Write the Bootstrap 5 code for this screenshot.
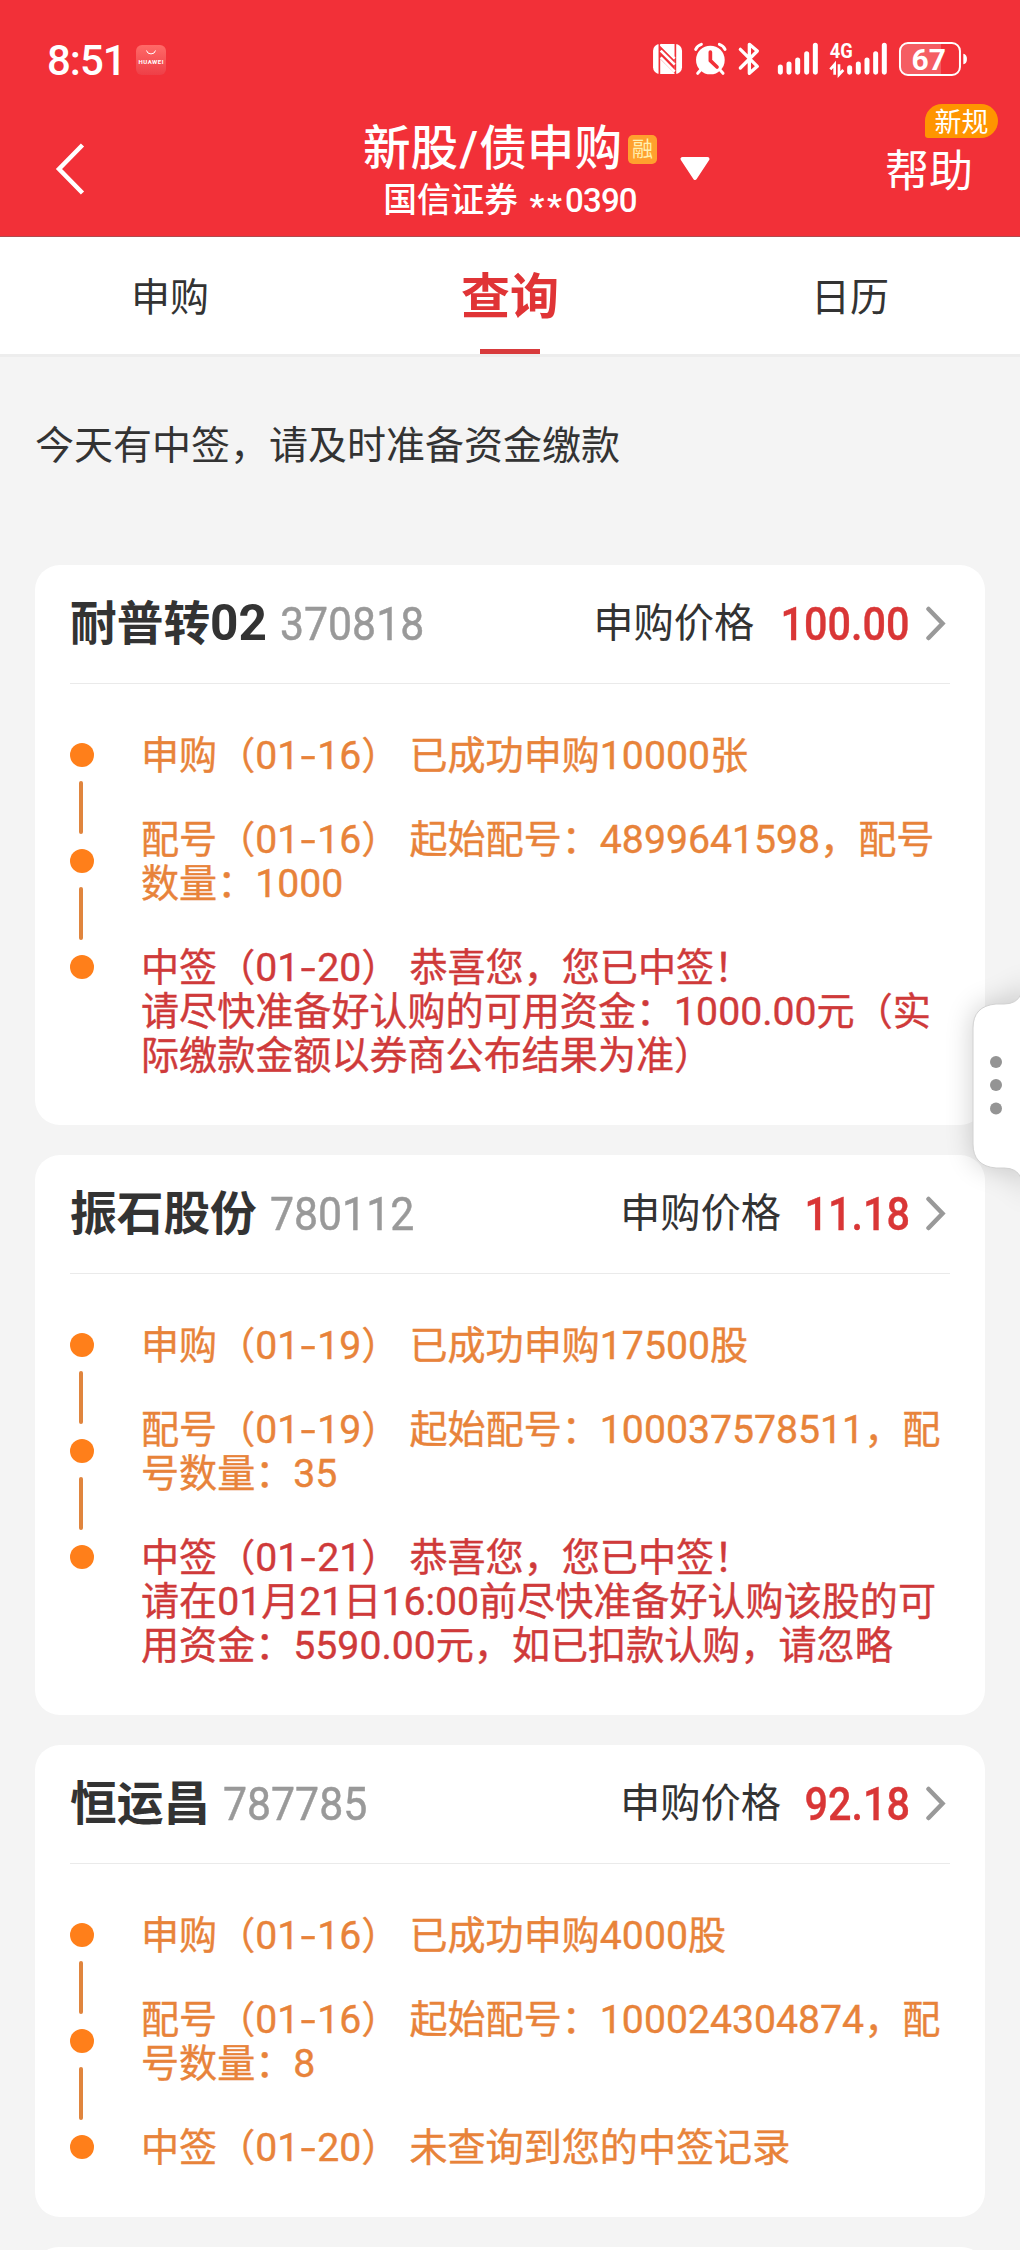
<!DOCTYPE html>
<html lang="zh-CN">
<head>
<meta charset="utf-8">
<meta name="viewport" content="width=device-width, initial-scale=1">
<title>新股/债申购</title>
<link rel="stylesheet" href="https://cdn.jsdelivr.net/npm/bootstrap@5.3.0/dist/css/bootstrap.min.css">
<style>
  body{font-family:Roboto,"Noto Sans CJK SC",sans-serif;background:#f4f4f4;color:#333;width:1020px;height:2250px;overflow:hidden;position:relative}
  .app-top{background:#f23038;height:237px;border-bottom:1px solid #b04a4e;color:#fff}
  .status-row{height:100px;padding:41px 50px 0 47px}
  .clock{font-size:42px;line-height:40px;font-weight:500;letter-spacing:-1px;width:89px}
  .app-chip{margin-top:4px}
  .nav-grid{display:grid;grid-template-columns:1fr auto 1fr;height:136px}
  .back-ico{margin:42px 0 0 55px}
  .page-title{font-size:47.6px;line-height:58px;font-weight:500;margin-top:20px}
  .slash{display:inline-block;width:21px;text-align:center}
  .margin-tag{width:29px;height:29px;border-radius:5px;background:#ffa02e;color:#fff0b0;font-size:21px;line-height:28px;margin:0 0 0 6px}
  .broker{font-size:33.700px;line-height:46px;font-weight:500}
  .stars{display:inline-block;width:36px;letter-spacing:2.6px;vertical-align:-6px;margin-left:11px}
  .acct{font-size:33px;font-weight:500;letter-spacing:-.8px}
  .down-ico{margin:56px 0 0 22px}
  .help-link{font-size:44px;line-height:60px;padding:42px 47px 0 0;position:relative}
  .new-flag{position:absolute;left:40px;top:4px;width:73px;height:34px;border-radius:17px 17px 17px 3px;background:#ff9500;font-size:27px;line-height:38px;text-align:center}
  .tab-row{height:120px;background:#fff;border-bottom:3px solid #ededed}
  .tab-item{flex:1 1 0;font-size:39px;color:#333;position:relative;padding-top:5px}
  .tab-item.active{font-size:49px;font-weight:700;color:#e03436}
  .tab-item.active::after{content:"";position:absolute;left:140px;bottom:0;width:60px;height:5px;background:#d83a3c}
  .notice{font-size:39px;line-height:60px;padding:59px 35px 89px}
  .stock{border:0;border-radius:25px;width:950px;margin:0 0 30px 35px;padding:0 35px 47px;background:#fff}
  .stock-head{height:119px;border-bottom:1px solid #eaeaea;line-height:60px}
  .nm{font-size:46.7px;font-weight:700}
  .nm-num{font-size:49.5px;line-height:1}
  .code{font-size:47px;color:#999;display:inline-block;transform:scaleX(.91);transform-origin:0 50%;margin-left:13px;-webkit-text-stroke:.5px #999}
  .lbl{font-size:40.3px}
  .price{font-size:47px;font-weight:500;color:#d93636;transform:scaleX(.88);transform-origin:100% 50%;margin-left:9px;-webkit-text-stroke:.4px #d93636}
  .steps{padding-top:50px;font-size:38.1px;line-height:44px;color:#e8833a;-webkit-text-stroke:.4px currentColor}
  .rail{width:71px;padding-top:9px}
  .dot{width:24px;height:24px;border-radius:50%;background:#ff7f1a}
  .bar{width:4px;height:53px;border-radius:2px;background:#e0853e;margin:14px 0 15px 9px}
  .step{margin-bottom:40px;white-space:nowrap}
  .step:last-child{margin-bottom:0}
  .step div{height:44px}
  .win{color:#cf3a3a}
  .n{font-size:39.2px}
  .hy{display:inline-block;width:18px;text-align:center;transform:scaleX(1.35)}
  .sp{display:inline-block;width:10px}
  .drawer{position:absolute;right:0;top:950px}
</style>
<script src="https://cdn.jsdelivr.net/npm/bootstrap@5.3.0/dist/js/bootstrap.bundle.min.js"></script>
</head>
<body>
<header class="app-top">
  <div class="status-row d-flex align-items-start">
    <span class="clock">8:51</span>
    <svg class="app-chip" width="30" height="30" viewBox="0 0 30 30">
      <defs><linearGradient id="hw" x1="0" y1="0" x2="0" y2="1"><stop offset="0" stop-color="#ff6a68"/><stop offset="1" stop-color="#ee3f47"/></linearGradient></defs>
      <rect width="30" height="30" rx="6" fill="url(#hw)"/>
      <path d="M10.5 5.500a4.600 4.300 0 0 0 9 0" fill="none" stroke="#fff" stroke-width="1"/>
      <text x="15" y="19.300" font-size="6" font-weight="700" fill="#fff" text-anchor="middle" textLength="25" font-family="Roboto">HUAWEI</text>
    </svg>
    <svg class="ms-auto" width="320" height="36.670" viewBox="30 63 960 110" fill="#fff">
      <rect x="39" y="72" width="87" height="90" rx="20"/>
      <path d="M58 70v92M106 72v92" stroke="#f23038" stroke-width="5"/>
      <path d="M60 74L104 118V160L60 116Z" fill="#f23038"/>
      <path d="M62 92L104 134M62 112L104 155M62 74L104 116" stroke="#fff" stroke-width="8" fill="none"/>
      <circle cx="211" cy="120" r="43"/>
      <path d="M167 88Q172 77 184 73M255 88Q250 77 238 73M181 151l-8 9M241 151l8 9" stroke="#fff" stroke-width="9" stroke-linecap="round" fill="none"/>
      <path d="M211 96V122L231 141" stroke="#f23038" stroke-width="11" stroke-linecap="round" stroke-linejoin="round" fill="none"/>
      <path d="M301 88L352 139L328 160V73L352 93L301 144" stroke="#fff" stroke-width="10" stroke-linejoin="round" stroke-linecap="round" fill="none"/>
      <path d="M421 141V157M447 132V157M473 120V157M500 101V157M526 76V157M629 143V157M655 132V157M681 120V157M707 101V157M733 76V157" stroke="#fff" stroke-width="15" stroke-linecap="round"/>
      <text x="569" y="114" font-size="58" font-weight="700" font-family="Roboto" textLength="69" lengthAdjust="spacingAndGlyphs">4G</text>
      <path d="M571 148L584 133V164M597 133V164L610 150" fill="none" stroke="#fff" stroke-width="8"/>
      <path d="M795 72H903V162H795Q782 160 782 144V90Q782 74 795 72Z" fill="#fff" opacity=".22"/>
      <rect x="780" y="69" width="180" height="96" rx="24" fill="none" stroke="#fff" stroke-width="6"/>
      <path d="M970 101Q981 103 981 117T970 133Z"/>
      <text x="866" y="150" font-size="90" font-weight="700" font-family="Roboto" text-anchor="middle">67</text>
    </svg>
  </div>
  <div class="nav-grid">
    <div><svg class="back-ico d-block" width="32" height="54" viewBox="0 0 32 54"><path d="M27.500 3L4 27L27.500 51" fill="none" stroke="#fff" stroke-width="4.500"/></svg></div>
    <div>
      <div class="d-flex page-title align-items-center"><span>新股<span class="slash">/</span>债申购</span><span class="margin-tag fw-normal text-center">融</span></div>
      <div class="broker text-center text-nowrap">国信证券<span class="stars">**</span><span class="acct">0390</span></div>
    </div>
    <div class="d-flex justify-content-between align-items-start">
      <svg class="down-ico" width="32" height="26" viewBox="0 0 32 26"><path d="M3.500 3H28.500L16 22Z" fill="#fff" stroke="#fff" stroke-width="4" stroke-linejoin="round"/></svg>
      <div class="help-link">帮助<span class="new-flag">新规</span></div>
    </div>
  </div>
</header>

<nav class="tab-row d-flex text-center">
  <div class="tab-item d-flex align-items-center justify-content-center">申购</div>
  <div class="tab-item active d-flex align-items-center justify-content-center">查询</div>
  <div class="tab-item d-flex align-items-center justify-content-center">日历</div>
</nav>

<main>
  <div class="notice">今天有中签，请及时准备资金缴款</div>

  <section class="card stock">
    <div class="stock-head d-flex align-items-center">
      <span class="nm">耐普转<span class="nm-num">02</span></span><span class="code">370818</span>
      <span class="lbl ms-auto">申购价格</span><span class="price">100.00</span>
      <svg class="ms-3" width="24" height="36" viewBox="0 0 24 36"><path d="M2.500 3L16.500 17.500L2.500 32" fill="none" stroke="#999" stroke-width="4.500" stroke-linecap="round"/></svg>
    </div>
    <div class="steps d-flex">
      <div class="rail"><div class="dot"></div><div class="bar"></div><div class="dot"></div><div class="bar"></div><div class="dot"></div></div>
      <div>
        <div class="step"><div>申购（<span class="n">01<span class="hy">-</span>16</span>）<span class="sp"></span>已成功申购<span class="n">10000</span>张</div></div>
        <div class="step"><div>配号（<span class="n">01<span class="hy">-</span>16</span>）<span class="sp"></span>起始配号：<span class="n">4899641598</span>，配号</div><div>数量：<span class="n">1000</span></div></div>
        <div class="step win"><div>中签（<span class="n">01<span class="hy">-</span>20</span>）<span class="sp"></span>恭喜您，您已中签！</div><div>请尽快准备好认购的可用资金：<span class="n">1000.00</span>元（实</div><div>际缴款金额以券商公布结果为准）</div></div>
      </div>
    </div>
  </section>

  <section class="card stock">
    <div class="stock-head d-flex align-items-center">
      <span class="nm">振石股份</span><span class="code">780112</span>
      <span class="lbl ms-auto">申购价格</span><span class="price">11.18</span>
      <svg class="ms-3" width="24" height="36" viewBox="0 0 24 36"><path d="M2.500 3L16.500 17.500L2.500 32" fill="none" stroke="#999" stroke-width="4.500" stroke-linecap="round"/></svg>
    </div>
    <div class="steps d-flex">
      <div class="rail"><div class="dot"></div><div class="bar"></div><div class="dot"></div><div class="bar"></div><div class="dot"></div></div>
      <div>
        <div class="step"><div>申购（<span class="n">01<span class="hy">-</span>19</span>）<span class="sp"></span>已成功申购<span class="n">17500</span>股</div></div>
        <div class="step"><div>配号（<span class="n">01<span class="hy">-</span>19</span>）<span class="sp"></span>起始配号：<span class="n">100037578511</span>，配</div><div>号数量：<span class="n">35</span></div></div>
        <div class="step win"><div>中签（<span class="n">01<span class="hy">-</span>21</span>）<span class="sp"></span>恭喜您，您已中签！</div><div>请在<span class="n">01</span>月<span class="n">21</span>日<span class="n">16:00</span>前尽快准备好认购该股的可</div><div>用资金：<span class="n">5590.00</span>元，如已扣款认购，请忽略</div></div>
      </div>
    </div>
  </section>

  <section class="card stock">
    <div class="stock-head d-flex align-items-center">
      <span class="nm">恒运昌</span><span class="code">787785</span>
      <span class="lbl ms-auto">申购价格</span><span class="price">92.18</span>
      <svg class="ms-3" width="24" height="36" viewBox="0 0 24 36"><path d="M2.500 3L16.500 17.500L2.500 32" fill="none" stroke="#999" stroke-width="4.500" stroke-linecap="round"/></svg>
    </div>
    <div class="steps d-flex">
      <div class="rail"><div class="dot"></div><div class="bar"></div><div class="dot"></div><div class="bar"></div><div class="dot"></div></div>
      <div>
        <div class="step"><div>申购（<span class="n">01<span class="hy">-</span>16</span>）<span class="sp"></span>已成功申购<span class="n">4000</span>股</div></div>
        <div class="step"><div>配号（<span class="n">01<span class="hy">-</span>16</span>）<span class="sp"></span>起始配号：<span class="n">100024304874</span>，配</div><div>号数量：<span class="n">8</span></div></div>
        <div class="step"><div>中签（<span class="n">01<span class="hy">-</span>20</span>）<span class="sp"></span>未查询到您的中签记录</div></div>
      </div>
    </div>
  </section>

  <section class="card stock"></section>
</main>

<svg class="drawer" width="100" height="270" viewBox="920 950 100 270">
  <defs><filter id="sh" x="-100%" y="-50%" width="300%" height="200%"><feGaussianBlur stdDeviation="14"/></filter></defs>
  <path d="M1030 985V1200L1020 1182Q1018 1168 1004 1168H994Q973 1164 973 1146V1026Q973 1006 994 1004H1004Q1018 1004 1020 985Z" fill="#000" opacity=".2" filter="url(#sh)"/>
  <path d="M1021 994Q1017 1004 1004 1004H996Q973 1006 973 1028V1144Q973 1166 996 1168H1004Q1017 1168 1021 1178Z" fill="#fff" stroke="#d2d2d2" stroke-width="1"/>
  <g fill="#949494"><circle cx="996" cy="1062" r="6"/><circle cx="996" cy="1085" r="6"/><circle cx="996" cy="1108.500" r="6"/></g>
</svg>
</body>
</html>
